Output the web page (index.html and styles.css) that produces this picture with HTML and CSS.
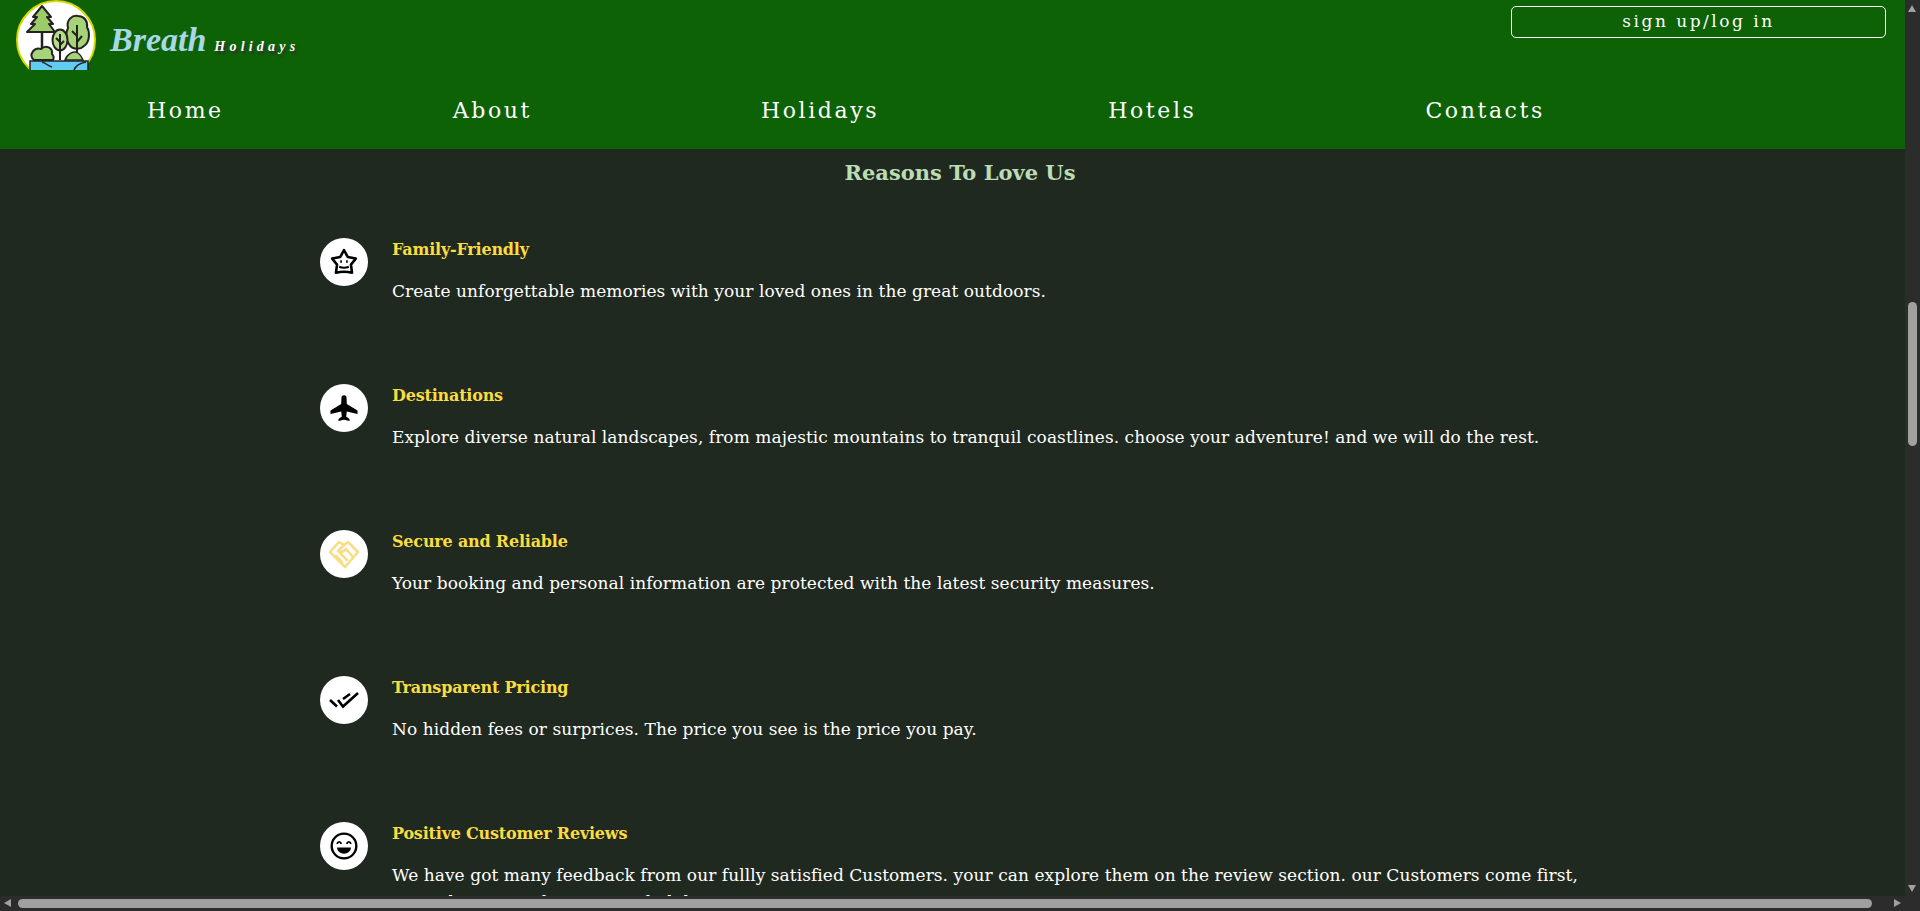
FILE: index.html
```html
<!DOCTYPE html>
<html lang="en">
  <head>
    <meta charset="UTF-8" />
    <meta name="viewport" content="width=device-width, initial-scale=1.0" />
    <title>Breath Holidays</title>
    <link rel="stylesheet" href="styles.css">
  </head>
  <body>
    <div class="window">
      <div class="page">
        <header class="header">
          <div class="topbar">
            <a href="#" class="brand">
              <svg class="logo" width="80" height="70" viewBox="0 0 80 70">
                <circle cx="40" cy="40" r="39" fill="#fff" stroke="#d8d800" stroke-width="2"/>
                <path d="M26 30V48" stroke="#222" stroke-width="2.500"/>
                <path d="M26 6L35 17H31L37 24H33L39 32H11L19 24H15L21 17H17Z" fill="#9ccb68" stroke="#222" stroke-width="2" stroke-linejoin="round"/>
                <path d="M18 60C12 55 18 47 25 49C30 44 37 48 36 54C38 56 38 58 37 60Z" fill="#a6d378" stroke="#222" stroke-width="2"/>
                <path d="M52 28C50 20 56 15 62 16C68 16 72 21 71 27C74 32 74 42 68 46C64 50 56 50 53 44C49 40 50 32 52 28Z" fill="#a6d378" stroke="#222" stroke-width="2"/>
                <path d="M61 25V58M61 36L56 31M61 42L66 36" stroke="#222" stroke-width="2" fill="none"/>
                <ellipse cx="44" cy="40" rx="7.500" ry="10.500" fill="#b5dc88" stroke="#222" stroke-width="2"/>
                <path d="M44 34V60M44 42L40 38M44 45L48 41" stroke="#222" stroke-width="2" fill="none"/>
                <path d="M49 60C51 54 58 50 62 53C65 55 66 58 67 60Z" fill="#a6d378" stroke="#222" stroke-width="1.500"/>
                <path d="M14 61H72V71H14Z" fill="#62cdf0" stroke="#222" stroke-width="1.500"/>
                <path d="M26 62C30 63 32 66 36 67M58 70C60 65 64 63 70 62" stroke="#222" stroke-width="1.500" fill="none"/>
              </svg>
              <span class="brand-name">Breath</span>
              <span class="brand-sub">Holidays</span>
            </a>
            <a href="#" class="login">sign up/log in</a>
          </div>
          <nav class="nav">
            <a href="#">Home</a>
            <a href="#">About</a>
            <a href="#">Holidays</a>
            <a href="#">Hotels</a>
            <a href="#">Contacts</a>
          </nav>
        </header>
        <main class="reasons">
          <h2>Reasons To Love Us</h2>
          <div class="reason">
            <span class="circle">
              <svg width="30" height="30" viewBox="0 0 28 28" fill="none" stroke="#000" stroke-width="2.400" stroke-linejoin="round">
                <path d="M14 3L17.500 9.300L25 10.800L20.500 16.400L21.500 24C17 23 11 23 6.500 24L7.500 16.400L3 10.800L10.500 9.300Z"/>
                <path d="M9.500 18.500C12 19.500 16 19.500 18.500 18.500" stroke-width="2"/>
                <path d="M10.500 13.500H12M16 13.500H17.500" stroke-width="2.400"/>
              </svg>
            </span>
            <div class="reason-text">
              <h3>Family-Friendly</h3>
              <p>Create unforgettable memories with your loved ones in the great outdoors.</p>
            </div>
          </div>
          <div class="reason">
            <span class="circle">
              <svg width="28" height="28" viewBox="0 0 28 28" fill="#000">
                <path d="M11.500 3.500C11.500 0.500 16.500 0.500 16.500 3.500L16.800 10L27.500 16.500V20L16.800 17.500L16.200 22.500L19.500 25V27L14 25.800L8.500 27V25L11.800 22.500L11.200 17.500L0.500 20V16.500L11.200 10Z"/>
              </svg>
            </span>
            <div class="reason-text">
              <h3>Destinations</h3>
              <p>Explore diverse natural landscapes, from majestic mountains to tranquil coastlines. choose your adventure! and we will do the rest.</p>
            </div>
          </div>
          <div class="reason">
            <span class="circle">
              <svg width="32" height="32" viewBox="0 0 32 32" fill="none" stroke="#f8dc86" stroke-width="2.600" stroke-linejoin="round" stroke-linecap="round">
                <path d="M2 14L11 4L16 7L20 4L30 14L17 29Z"/>
                <path d="M16 7L10 13C12 15 15 14 18 11L25 19"/>
                <path d="M8 18L14 24M12 15L19 22"/>
              </svg>
            </span>
            <div class="reason-text">
              <h3>Secure and Reliable</h3>
              <p>Your booking and personal information are protected with the latest security measures.</p>
            </div>
          </div>
          <div class="reason">
            <span class="circle">
              <svg width="32" height="32" viewBox="0 0 32 32" fill="none" stroke="#000" stroke-width="2.600">
                <path d="M2 16L9 22.500M10 16L15 22.500L30 9M15 15L22 10"/>
              </svg>
            </span>
            <div class="reason-text">
              <h3>Transparent Pricing</h3>
              <p>No hidden fees or surprices. The price you see is the price you pay.</p>
            </div>
          </div>
          <div class="reason">
            <span class="circle">
              <svg width="30" height="30" viewBox="0 0 28 28" fill="none" stroke="#000" stroke-width="2.200">
                <circle cx="14" cy="14" r="11.500"/>
                <path d="M7.500 12C8.500 9.500 10.500 9.500 11.500 12M16.500 12C17.500 9.500 19.500 9.500 20.500 12" stroke-width="1.800"/>
                <path d="M7.500 15.500H20.500C20 23 8 23 7.500 15.500Z" fill="#000" stroke="none"/>
              </svg>
            </span>
            <div class="reason-text">
              <h3>Positive Customer Reviews</h3>
              <p>We have got many feedback from our fullly satisfied Customers. your can explore them on the review section. our Customers come first, we make service best on our holidays.</p>
            </div>
          </div>
        </main>
      </div>
      <div class="scroll-y">
        <span class="arrow-up"></span>
        <span class="thumb-y"></span>
        <span class="arrow-down"></span>
      </div>
      <div class="scroll-x">
        <span class="arrow-left"></span>
        <span class="thumb-x"></span>
        <span class="arrow-right"></span>
      </div>
      <div class="scroll-corner"></div>
    </div>
  </body>
</html>
```

FILE: styles.css
```css
* {
  margin: 0;
  padding: 0;
  box-sizing: border-box;
  text-decoration: none;
}
html,
body {
  height: 100%;
  overflow: hidden;
}
body {
  background-color: #1f2920;
  font-family: "DejaVu Serif", "Liberation Serif", serif;
  color: #ffffff;
}
.window {
  display: grid;
  grid-template-columns: 1905px 15px;
  grid-template-rows: 896px 15px;
  width: 1920px;
  height: 911px;
}
.page {
  overflow: hidden;
}
.header {
  width: 1920px;
  height: 149px;
  background-color: #0c6205;
}
.topbar {
  display: flex;
  justify-content: space-between;
  height: 70px;
  padding: 0 34px 0 16px;
}
.brand {
  display: flex;
  align-items: baseline;
  color: #ffffff;
}
.logo {
  align-self: flex-start;
  margin-right: 14px;
}
.brand-name {
  font-family: "Liberation Serif", serif;
  font-size: 34px;
  font-weight: bold;
  font-style: italic;
  line-height: 80px;
  color: #a8d8e6;
  margin-right: 8px;
}
.brand-sub {
  font-family: "Liberation Serif", serif;
  font-size: 14px;
  font-weight: bold;
  font-style: italic;
  letter-spacing: 4.2px;
  text-shadow: 2px 3px 2px #333;
}
.login {
  align-self: flex-start;
  width: 375px;
  height: 32px;
  margin-top: 6px;
  border: 1px solid #ffffff;
  border-radius: 5px;
  text-align: center;
  font-size: 17px;
  line-height: 28px;
  letter-spacing: 2.500px;
  color: #ffffff;
}
.nav {
  display: flex;
  gap: 229px;
  padding: 26px 0 0 147px;
}
.nav a {
  font-size: 22px;
  line-height: 30px;
  letter-spacing: 2.600px;
  color: #ffffff;
}
.reasons {
  width: 1920px;
  padding: 0 320px;
}
.reasons h2 {
  height: 89px;
  padding-top: 9px;
  text-align: center;
  font-size: 21px;
  line-height: 30px;
  color: #bcdcb4;
}
.reason {
  display: flex;
  gap: 24px;
  height: 146px;
}
.circle {
  display: flex;
  align-items: center;
  justify-content: center;
  flex: none;
  width: 48px;
  height: 48px;
  border-radius: 50%;
  background-color: #ffffff;
}
.reason-text {
  flex: 1;
}
.reason-text h3 {
  padding-top: 1px;
  font-size: 16px;
  line-height: 21px;
  letter-spacing: -0.2px;
  color: #fbdc3e;
}
.reason-text p {
  max-width: 1195px;
  margin-top: 18px;
  font-size: 17px;
  line-height: 27px;
  letter-spacing: 0.06px;
}
.scroll-y,
.scroll-x,
.scroll-corner {
  position: relative;
  background-color: #2c2c2c;
}
.thumb-y {
  position: absolute;
  left: 3px;
  top: 302px;
  width: 9px;
  height: 144px;
  border-radius: 5px;
  background-color: #a0a0a0;
}
.thumb-x {
  position: absolute;
  left: 18px;
  top: 3px;
  width: 1854px;
  height: 9px;
  border-radius: 5px;
  background-color: #a0a0a0;
}
.arrow-up,
.arrow-down,
.arrow-left,
.arrow-right {
  position: absolute;
  width: 0;
  height: 0;
  border-style: solid;
  border-color: transparent;
}
.arrow-up {
  left: 3px;
  top: 5px;
  border-width: 0 4.5px 7px;
  border-bottom-color: #a0a0a0;
}
.arrow-down {
  left: 3px;
  bottom: 4px;
  border-width: 7px 4.5px 0;
  border-top-color: #a0a0a0;
}
.arrow-left {
  left: 4px;
  top: 3px;
  border-width: 4.5px 7px 4.5px 0;
  border-right-color: #a0a0a0;
}
.arrow-right {
  right: 4px;
  top: 3px;
  border-width: 4.5px 0 4.5px 7px;
  border-left-color: #a0a0a0;
}
```
